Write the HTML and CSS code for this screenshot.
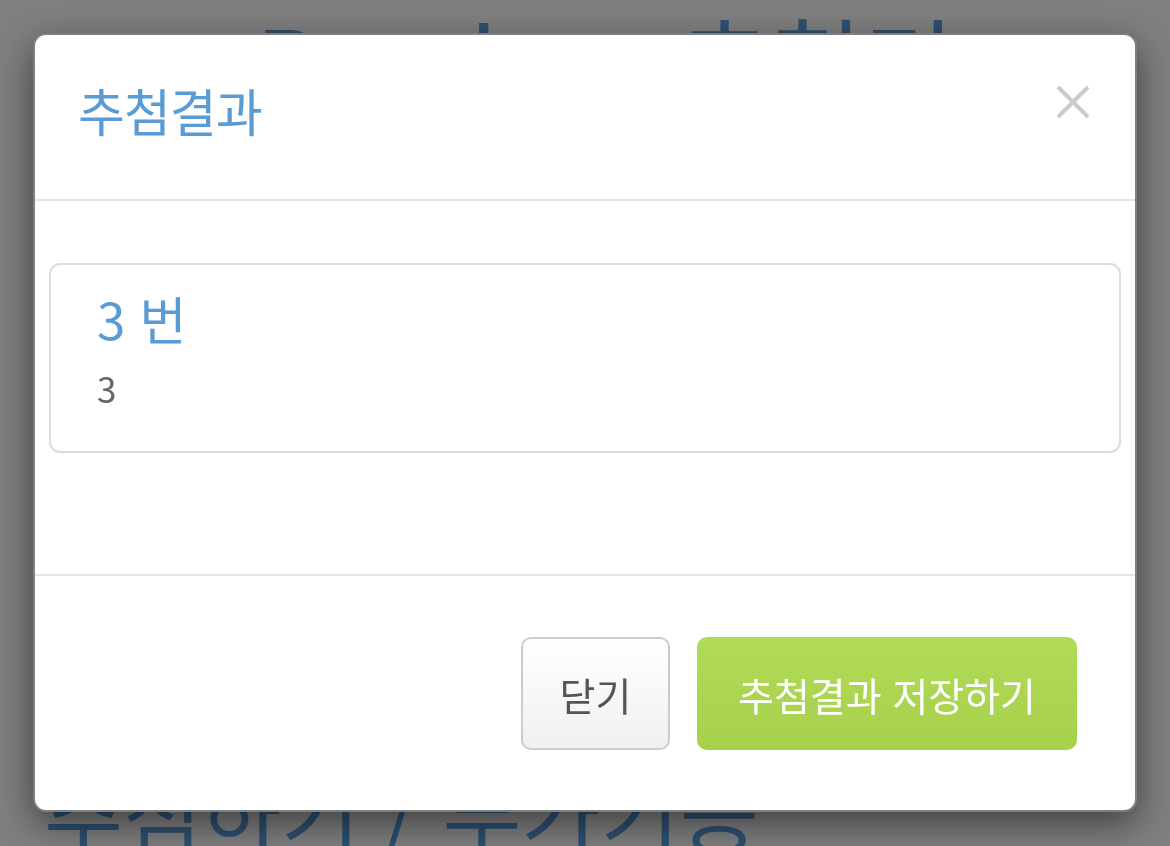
FILE: index.html
```html
<!DOCTYPE html>
<html lang="ko">
<head>
    <meta charset="UTF-8">
    <meta name="viewport" content="width=device-width, initial-scale=1.0">
    <title>Random 추첨기</title>
    <link rel="stylesheet" href="styles.css">
</head>
<body>

<div class="page">
    <h1 class="page-title">Random 추첨기</h1>
    <h2 class="section-title">추첨하기 / 부가기능</h2>
</div>

<div class="modal-backdrop">
    <div class="modal">
        <div class="modal-header">
            <h4 class="modal-title">추첨결과</h4>
            <button class="close" aria-label="Close">
                <svg width="34" height="34" viewBox="0 0 34 34">
                    <path d="M2 2 L32 32 M32 2 L2 32" stroke="#cbcbcb" stroke-width="4" fill="none"/>
                </svg>
            </button>
        </div>
        <div class="modal-body">
            <div class="well">
                <h3 class="result-no">3 번</h3>
                <p class="result-text">3</p>
            </div>
        </div>
        <div class="modal-footer">
            <button class="btn btn-default">닫기</button>
            <button class="btn btn-save">추첨결과 저장하기</button>
        </div>
    </div>
</div>

</body>
</html>
```

FILE: styles.css
```css
body {
    margin: 0;
    padding: 0;
    font-family: "Noto Sans CJK KR", "Noto Sans", sans-serif;
    background-color: #fff;
    overflow: hidden;
}

.page {
    height: 846px;
    color: #5ba0e2;
}

.page-title {
    margin: 0;
    padding: 0 0 0 40px;
    font-size: 100px;
    font-weight: normal;
    line-height: 120px;
    text-align: center;
}

.section-title {
    margin: 0;
    padding: 636px 0 0 44px;
    font-size: 86px;
    font-weight: normal;
    line-height: 110px;
}

.modal-backdrop {
    position: fixed;
    top: 0;
    left: 0;
    right: 0;
    bottom: 0;
    background-color: rgba(0, 0, 0, 0.5);
}

.modal {
    width: 1100px;
    margin: 33px auto 0;
    background-color: #fff;
    border: 2px solid rgba(0, 0, 0, 0.5);
    border-radius: 13px;
    box-shadow: 0 12px 36px rgba(0, 0, 0, 0.5);
}

.modal-header {
    display: flex;
    justify-content: space-between;
    align-items: center;
    height: 150px;
    padding: 0 45px 14px 43px;
    border-bottom: 2px solid #e5e5e5;
}

.modal-title {
    margin: 0;
    font-size: 51px;
    font-weight: normal;
    color: #5a9bd4;
    letter-spacing: -1px;
}

.close {
    padding: 0;
    margin-top: -16px;
    border: none;
    background: none;
    line-height: 0;
}

.modal-body {
    padding: 62px 14px 121px;
}

.well {
    height: 190px;
    padding: 0 46px;
    border: 2px solid #dcdcdc;
    border-radius: 11px;
    box-sizing: border-box;
}

.result-no {
    margin: 0;
    padding-top: 21px;
    font-size: 51px;
    font-weight: normal;
    line-height: 64px;
    color: #5a9bd4;
}

.result-text {
    margin: 0;
    padding-top: 16px;
    font-size: 35px;
    line-height: 44px;
    color: #666;
}

.modal-footer {
    display: flex;
    justify-content: flex-end;
    gap: 27px;
    padding: 61px 58px 60px;
    border-top: 2px solid #e5e5e5;
}

.btn {
    height: 113px;
    border-radius: 10px;
    font-family: "Noto Sans CJK KR", "Noto Sans", sans-serif;
    font-size: 39px;
    cursor: pointer;
}

.btn-default {
    width: 149px;
    color: #555;
    background: linear-gradient(#ffffff, #f0f0f0);
    border: 2px solid #cccccc;
}

.btn-save {
    width: 380px;
    color: #fff;
    background: linear-gradient(#b1da58, #a7d14b);
    border: none;
}
```
